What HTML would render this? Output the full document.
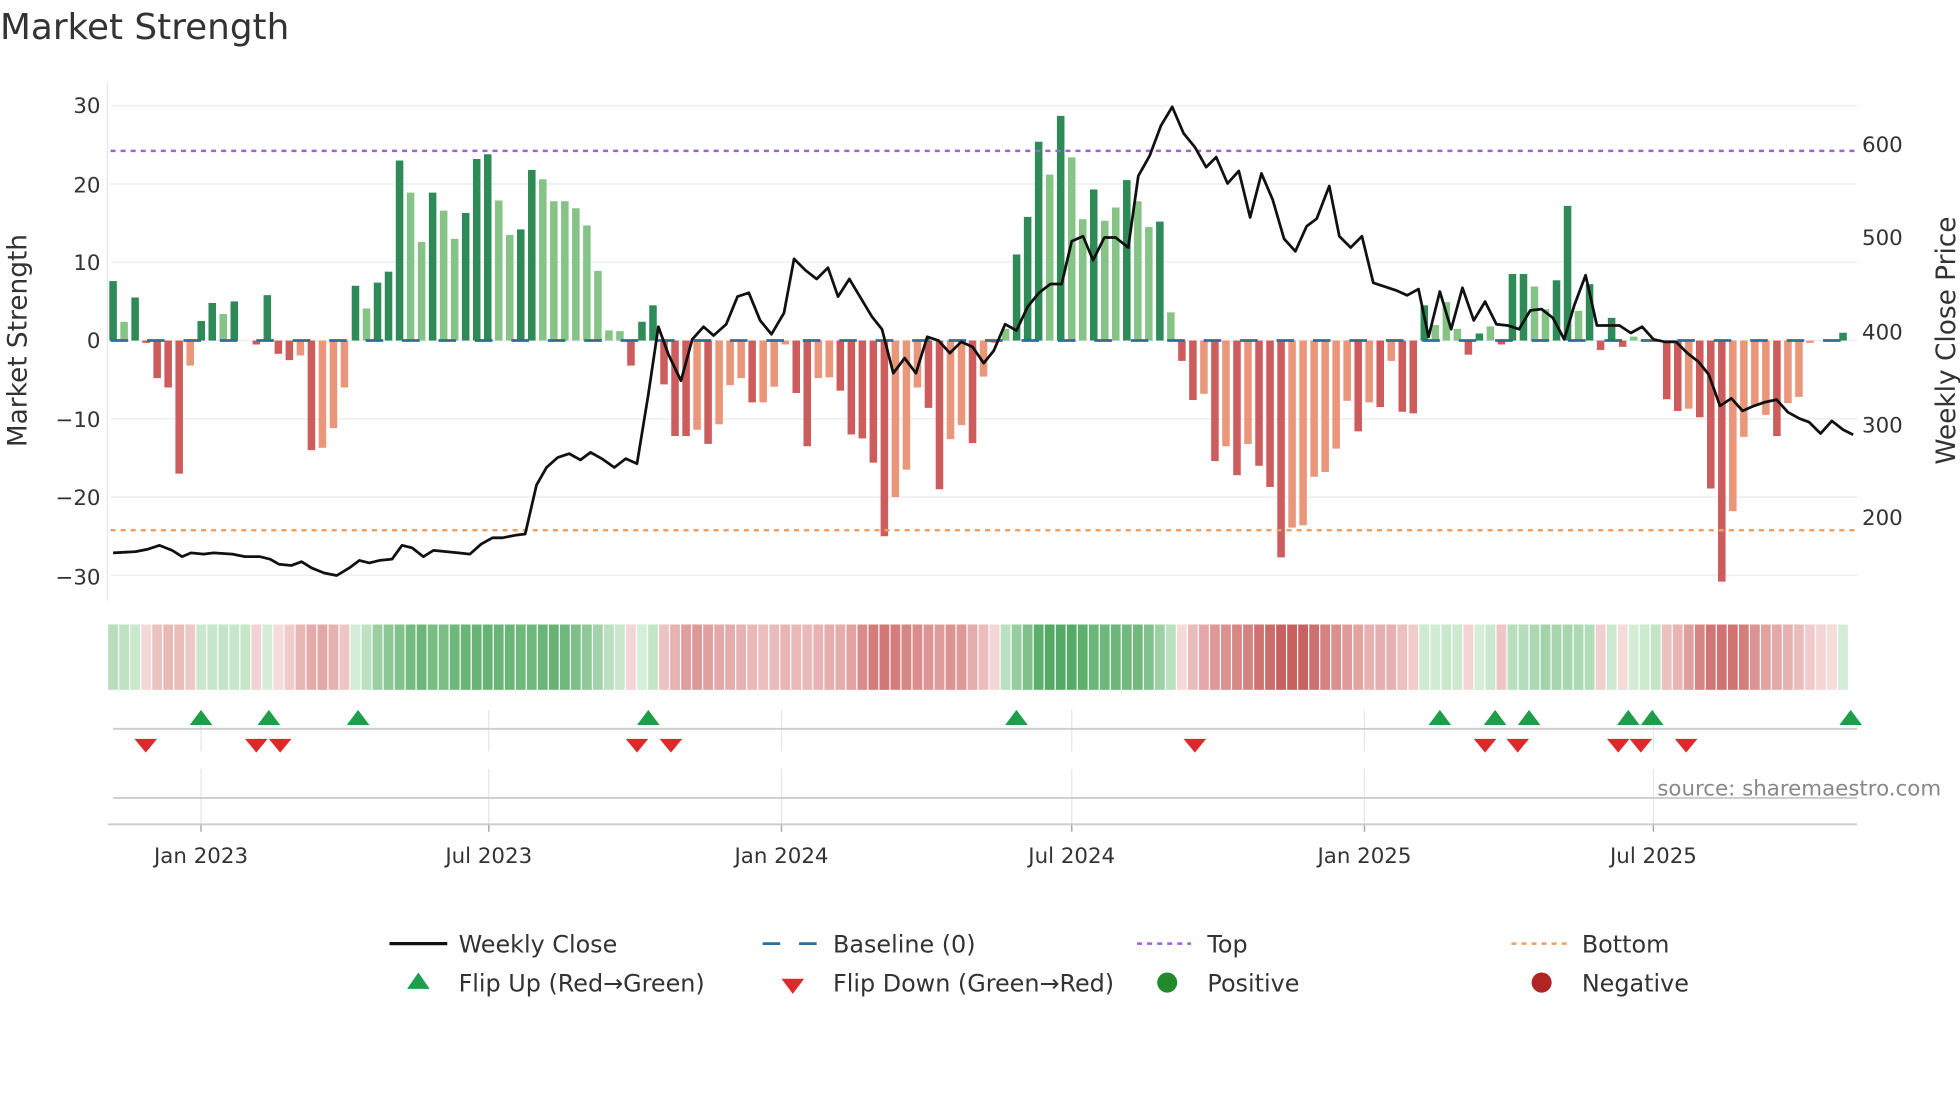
<!DOCTYPE html>
<html><head><meta charset="utf-8"><style>
html,body{margin:0;padding:0;background:#fff;}
svg{display:block;font-family:"DejaVu Sans","Liberation Sans",sans-serif;}
</style></head><body>
<svg id="s" width="1960" height="1102" viewBox="0 0 1560 877" xmlns="http://www.w3.org/2000/svg">
<rect width="1560" height="877" fill="#fff"/>
<text x="0" y="31" font-size="28.5" fill="#333">Market Strength</text>
<g id="grid"></g>
<line x1="85.5" y1="65" x2="85.5" y2="478" stroke="#e6e6ee" stroke-width="1"/>
<g id="hm"></g>
<g id="bars"></g>
<line x1="88" y1="271" x2="1478" y2="271" stroke="#2a6f9c" stroke-width="2.2" stroke-dasharray="14,15"/>
<line x1="88" y1="120" x2="1478" y2="120" stroke="#9c62dc" stroke-width="2" stroke-dasharray="4,4"/>
<line x1="88" y1="422" x2="1478" y2="422" stroke="#eea060" stroke-width="2" stroke-dasharray="4,4"/>
<polyline id="price" fill="none" stroke="#111" stroke-width="2.2" stroke-linejoin="round"/>
<g font-size="17" fill="#333" text-anchor="end">
<text x="80" y="90">30</text><text x="80" y="153">20</text><text x="80" y="215">10</text><text x="80" y="277">0</text>
<text x="80" y="340">−10</text><text x="80" y="402">−20</text><text x="80" y="465">−30</text>
</g>
<g font-size="17" fill="#333">
<text x="1482" y="121">600</text><text x="1482" y="195">500</text><text x="1482" y="270">400</text><text x="1482" y="344">300</text><text x="1482" y="418">200</text>
</g>
<text transform="translate(21,271) rotate(-90)" font-size="21" fill="#333" text-anchor="middle">Market Strength</text>
<text transform="translate(1556,271) rotate(-90)" font-size="21" fill="#333" text-anchor="middle">Weekly Close Price</text>
<g id="mk"></g>
<line x1="90" y1="580" x2="1478" y2="580" stroke="#ccc" stroke-width="1.5"/>
<line x1="90" y1="635" x2="1478" y2="635" stroke="#ccc" stroke-width="1.5"/>
<line x1="86" y1="656" x2="1478" y2="656" stroke="#ccc" stroke-width="1.5"/>
<text x="1545" y="633" font-size="17" fill="#888" text-anchor="end">source: sharemaestro.com</text>
<g id="xt" font-size="17" fill="#333" text-anchor="middle"></g>
<g font-size="19" fill="#333">
<line x1="310" y1="751" x2="356" y2="751" stroke="#111" stroke-width="2.5"/><text x="365" y="758">Weekly Close</text>
<line x1="607" y1="751" x2="650" y2="751" stroke="#2a6f9c" stroke-width="2.2" stroke-dasharray="14,15"/><text x="663" y="758">Baseline (0)</text>
<line x1="905" y1="751" x2="948" y2="751" stroke="#9c62dc" stroke-width="2" stroke-dasharray="4,4"/><text x="961" y="758">Top</text>
<line x1="1203" y1="751" x2="1248" y2="751" stroke="#eea060" stroke-width="2" stroke-dasharray="4,4"/><text x="1259" y="758">Bottom</text>
<polygon points="324,787 342,787 333,774" fill="#1e9e4a"/><text x="365" y="789">Flip Up (Red→Green)</text>
<polygon points="622,779 640,779 631,791" fill="#dc2a2a"/><text x="663" y="789">Flip Down (Green→Red)</text>
<circle cx="929" cy="782" r="8" fill="#238a2a"/><text x="961" y="789">Positive</text>
<circle cx="1227" cy="782" r="8" fill="#b02424"/><text x="1259" y="789">Negative</text>
</g>
</svg>
<script>
var V=[["D",7.6],["L",2.4],["D",5.5],["R",-0.3],["R",-4.8],["R",-6],["R",-17],["O",-3.2],["D",2.5],["D",4.8],["L",3.4],["D",5],["D",0],["R",-0.5],["D",5.8],["R",-1.7],["R",-2.5],["O",-1.9],["R",-14],["O",-13.7],["O",-11.2],["O",-6],["D",7],["L",4.1],["D",7.4],["D",8.8],["D",23],["L",18.9],["L",12.6],["D",18.9],["L",16.6],["L",13],["D",16.3],["D",23.2],["D",23.8],["L",17.9],["L",13.5],["D",14.2],["D",21.8],["L",20.6],["L",17.8],["L",17.8],["L",16.9],["L",14.7],["L",8.9],["L",1.3],["L",1.2],["R",-3.2],["D",2.4],["D",4.5],["R",-5.6],["R",-12.2],["R",-12.2],["O",-11.4],["R",-13.2],["O",-10.7],["O",-5.7],["O",-4.8],["R",-7.9],["O",-7.9],["O",-5.9],["O",-0.5],["R",-6.7],["R",-13.5],["O",-4.8],["O",-4.7],["R",-6.4],["R",-12],["R",-12.5],["R",-15.6],["R",-25],["O",-20],["O",-16.5],["O",-6],["R",-8.6],["R",-19],["O",-12.6],["O",-10.8],["R",-13.1],
["O",-4.6],["O",-0.3],["L",1.5],["D",11],["D",15.8],["D",25.4],["L",21.2],["D",28.7],["L",23.4],["L",15.5],["D",19.3],["L",15.3],["L",17],["D",20.5],["L",17.8],["L",14.5],["D",15.2],["L",3.6],["R",-2.6],["R",-7.6],["O",-6.8],["R",-15.4],["O",-13.5],["R",-17.2],["O",-13.2],["R",-16],["R",-18.7],["R",-27.7],["O",-23.9],["O",-23.6],["O",-17.4],["O",-16.8],["O",-13.8],["O",-7.7],["R",-11.6],["O",-7.9],["R",-8.5],["O",-2.6],["R",-9.1],["R",-9.3],["D",4.5],["L",2],["L",4.9],["L",1.5],["R",-1.8],["D",0.9],["L",1.8],["R",-0.5],["D",8.5],["D",8.5],["L",6.9],["L",4],["D",7.7],["D",17.2],["L",3.8],["D",7.2],["R",-1.2],["D",2.9],["R",-0.8],["L",0.5],["L",0],["L",0],["R",-7.5],["R",-9],["O",-8.7],["R",-9.8],["R",-18.9],["R",-30.8],["O",-21.8],["O",-12.3],["O",-8.3],["O",-9.5],["R",-12.2],["O",-8],["O",-7.2],["O",-0.3],["O",0],["O",0],["D",1]];
var C={D:"#2e8b57",L:"#86c386",R:"#cd5c5c",O:"#e9967a"};
var ns="http://www.w3.org/2000/svg";
function el(t,a,p){var e=document.createElementNS(ns,t);for(var k in a)e.setAttribute(k,a[k]);document.getElementById(p).appendChild(e);return e;}
var x0=90,dx=8.77,k=6.23;
for(var g=-30;g<=30;g+=10){var y=271-g*k;el("line",{x1:88,x2:1478,y1:y,y2:y,stroke:"#efeff3","stroke-width":1.3},"grid");}
var n=V.length;
function mix(a,b,t){var r=[];for(var i=0;i<3;i++)r.push(Math.round(a[i]+(b[i]-a[i])*t));return "rgb("+r.join(",")+")";}
for(var i=0;i<n;i++){
 var v=V[i][1],x=x0+dx*i;
 if(Math.abs(v)>0.05){var y=271-v*k;el("rect",{x:x-3,y:Math.min(y,271),width:6,height:Math.abs(v*k),fill:C[V[i][0]]},"bars");}
 var s=0,c=0;for(var j=i-2;j<=i+2;j++)if(j>=0&&j<n){s+=V[j][1];c++;}s/=c;
 var pos=V[i][0]=="D"||V[i][0]=="L";
 var t=Math.min(1,Math.abs(s)/22);
 var col=pos?mix([214,238,216],[84,170,100],t):mix([246,220,220],[200,96,94],t);
 el("rect",{x:x-3.9,y:497,width:7.8,height:52,fill:col},"hm");
}
var P=[[90,440],[108,439],[118,437],[127,434],[137,438],[145,443],[152,440],[162,441],[170,440],[185,441],[195,443],[207,443],[215,445],[222,449],[232,450],[240,447],[248,452],[258,456],[268,458],[278,452],[286,446],[294,448],[302,446],[312,445],[320,434],[328,436],[337,443],[345,438],[355,439],[365,440],[374,441],[383,433],[392,428],[400,428],[410,426],[418,425],[427,386],[435,372],[444,364],[453,361],[462,366],[470,360],[479,365],[489,372],[498,365],[507,369],[516,314],[524,260],[532,282],[542,303],[551,270],[560,260],[568,267],[578,258],[587,236],[596,233],[605,255],[614,266],[624,249],[632,206],[641,215],[650,222],[659,213],[667,236],[676,222],[685,237],[694,252],[702,262],[711,297],[720,285],[729,297],[738,268],[747,271],[756,281],[765,272],[774,276],[783,289],[791,279],[800,258],[809,263],[818,244],[827,233],[836,226],[845,226],[853,192],[862,188],[870,207],[879,189],[888,189],[898,197],[906,140],[915,124],[924,100],[933,85],[942,106],[951,117],[960,133],[968,125],[977,146],[986,136],[995,173],[1004,138],[1013,159],[1022,190],[1031,200],[1040,180],[1048,174],[1058,148],[1066,188],[1075,197],[1084,188],[1093,225],[1102,228],[1111,231],[1120,235],[1129,230],[1137,268],[1146,232],[1155,262],[1164,229],[1173,255],[1182,240],[1191,258],[1200,259],[1209,262],[1218,247],[1227,246],[1236,253],[1245,270],[1253,243],[1262,219],[1271,259],[1280,259],[1289,259],[1298,265],[1307,260],[1316,270],[1325,272],[1334,272],[1343,281],[1352,288],[1360,298],[1369,323],[1378,317],[1387,327],[1396,323],[1405,320],[1414,318],[1423,328],[1432,333],[1440,336],[1449,345],[1458,335],[1467,342],[1475,346]];
document.getElementById("price").setAttribute("points",P.map(function(p){return p.join(",")}).join(" "));
var T=[[160,"Jan 2023"],[389,"Jul 2023"],[622,"Jan 2024"],[853,"Jul 2024"],[1086,"Jan 2025"],[1316,"Jul 2025"]];
T.forEach(function(t){
 el("line",{x1:t[0],x2:t[0],y1:565,y2:598,stroke:"#e6e6ea","stroke-width":1},"mk");
 el("line",{x1:t[0],x2:t[0],y1:612,y2:656,stroke:"#e6e6ea","stroke-width":1},"mk");
 el("line",{x1:t[0],x2:t[0],y1:656,y2:662,stroke:"#aaa","stroke-width":1.2},"mk");
 var e=el("text",{x:t[0],y:687},"xt");e.textContent=t[1];});
[160,214,285,516,809,1146,1190,1217,1296,1315,1473].forEach(function(x){el("polygon",{points:(x-9)+",577 "+(x+9)+",577 "+x+",565",fill:"#1e9e4a"},"mk");});
[116,204,223,507,534,951,1182,1208,1288,1306,1342].forEach(function(x){el("polygon",{points:(x-9)+",588 "+(x+9)+",588 "+x+",599",fill:"#dc2a2a"},"mk");});
</script>
</body></html>
